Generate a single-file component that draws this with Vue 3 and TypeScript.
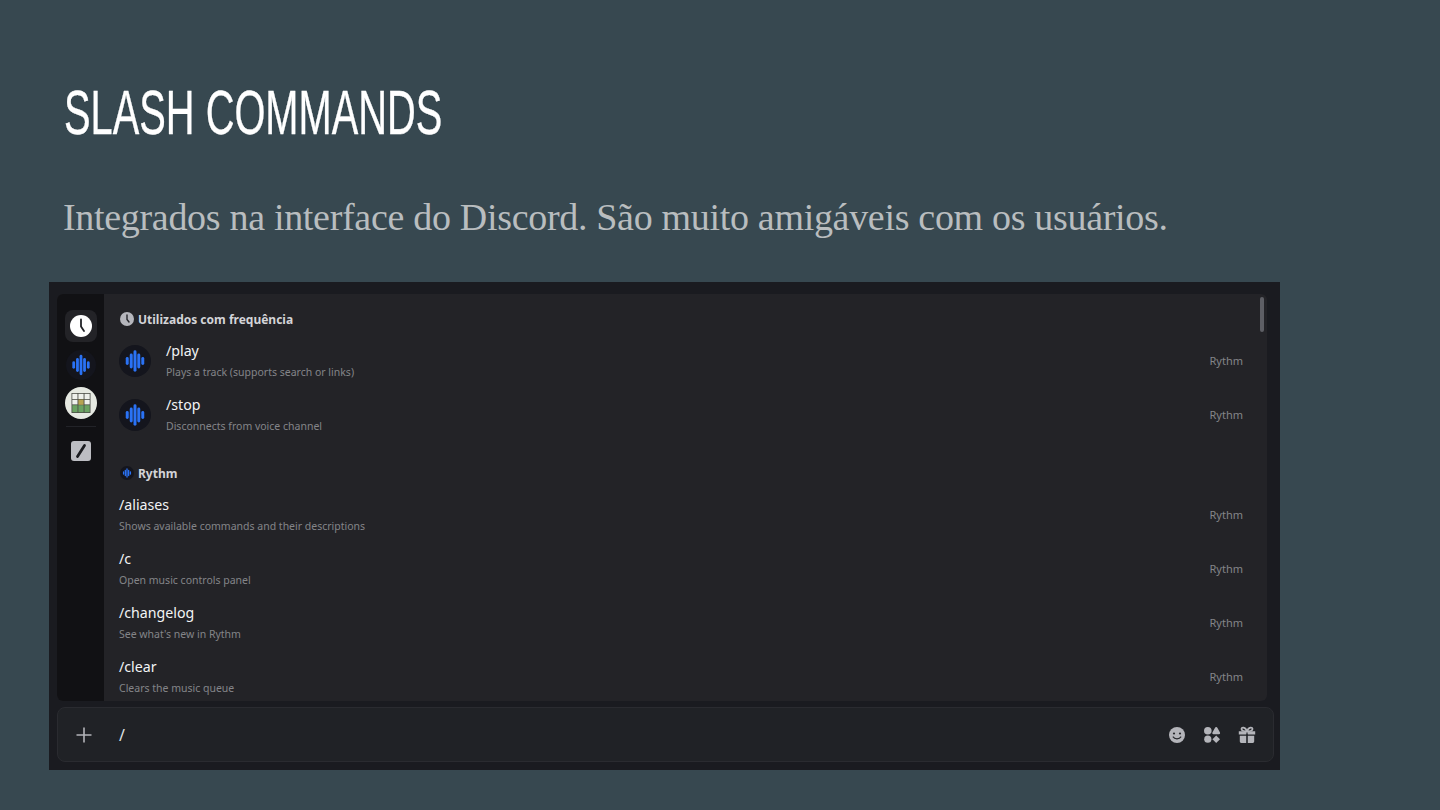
<script setup lang="ts">
interface Cmd { name: string; desc: string }
const frequent: Cmd[] = [
  { name: '/play', desc: 'Plays a track (supports search or links)' },
  { name: '/stop', desc: 'Disconnects from voice channel' },
]
const rythm: Cmd[] = [
  { name: '/aliases', desc: 'Shows available commands and their descriptions' },
  { name: '/c', desc: 'Open music controls panel' },
  { name: '/changelog', desc: "See what's new in Rythm" },
  { name: '/clear', desc: 'Clears the music queue' },
]
const bars = [
  { x: 5.9, h: 7 }, { x: 9.4, h: 13 }, { x: 12.7, h: 19 }, { x: 16, h: 13 }, { x: 19.5, h: 7 },
]
</script>

<template>
  <main class="slide">
    <h1 class="title"><span>SLASH COMMANDS</span></h1>
    <p class="subtitle">Integrados na interface do Discord. São muito amigáveis com os usuários.</p>
    <section class="shot">
      <div class="panel">
        <nav class="rail">
          <div class="rail-btn active">
            <svg width="22" height="22" viewBox="0 0 22 22"><circle cx="11" cy="11" r="11" fill="#fff"/><path d="M11 4.5V11.5L14 16" fill="none" stroke="#222327" stroke-width="1.8" stroke-linecap="round" stroke-linejoin="round"/></svg>
          </div>
          <div class="rail-btn">
            <svg width="30" height="30" viewBox="0 0 28 28"><circle cx="14" cy="14" r="14" fill="#14151d"/><rect v-for="b in bars" :key="b.x" :x="b.x" :y="14 - b.h / 2" width="2.6" :height="b.h" rx="1.3" fill="#2a72f5"/></svg>
          </div>
          <div class="rail-btn">
            <svg width="32" height="32" viewBox="0 0 32 32">
              <circle cx="16" cy="16" r="16" fill="#e6e9e2"/>
              <rect x="6.5" y="6" width="19" height="20" fill="#4c4e48"/>
              <g fill="#eef0ec"><rect x="7.3" y="6.8" width="5.2" height="5.2"/><rect x="13.4" y="6.8" width="5.2" height="5.2"/><rect x="19.5" y="6.8" width="5.2" height="5.2"/><rect x="7.3" y="12.8" width="5.2" height="4.6"/><rect x="19.5" y="12.8" width="5.2" height="4.6"/></g>
              <rect x="13.4" y="12.6" width="5.2" height="5.2" fill="#b5a352"/>
              <g fill="#6aa262"><rect x="7.3" y="18.2" width="5.2" height="7"/><rect x="13.4" y="18.2" width="5.2" height="7"/><rect x="19.5" y="18.2" width="5.2" height="7"/></g>
            </svg>
          </div>
          <div class="rail-sep"></div>
          <div class="rail-btn small">
            <svg width="20" height="20" viewBox="0 0 20 20"><rect width="20" height="20" rx="3" fill="#bcbdc2"/><path d="M6.5 15.5L13.5 4.5" stroke="#1b1c20" stroke-width="2.8" stroke-linecap="round"/></svg>
          </div>
        </nav>
        <div class="list">
          <header class="group first">
            <svg class="gicon" width="14" height="14" viewBox="0 0 14 14"><circle cx="7" cy="7" r="7" fill="#b5b6bc"/><path d="M7 3V7.4L9 10" fill="none" stroke="#25262b" stroke-width="1.4" stroke-linecap="round"/></svg>
            <span>Utilizados com frequência</span>
          </header>
          <div v-for="c in frequent" :key="c.name" class="row">
            <svg class="wave" width="32" height="32" viewBox="0 0 28 28"><circle cx="14" cy="14" r="14" fill="#14151d"/><rect v-for="b in bars" :key="b.x" :x="b.x" :y="14 - b.h / 2" width="2.6" :height="b.h" rx="1.3" fill="#2a72f5"/></svg>
            <div class="text">
              <div class="name">{{ c.name }}</div>
              <div class="desc">{{ c.desc }}</div>
            </div>
            <div class="source">Rythm</div>
          </div>
          <header class="group">
            <svg class="gicon" width="14" height="14" viewBox="0 0 28 28"><circle cx="14" cy="14" r="14" fill="#14151d"/><rect v-for="b in bars" :key="b.x" :x="b.x" :y="14 - b.h / 2" width="2.6" :height="b.h" rx="1.3" fill="#2a72f5"/></svg>
            <span>Rythm</span>
          </header>
          <div v-for="c in rythm" :key="c.name" class="row">
            <div class="text">
              <div class="name">{{ c.name }}</div>
              <div class="desc">{{ c.desc }}</div>
            </div>
            <div class="source">Rythm</div>
          </div>
          <div class="scrollbar"></div>
        </div>
      </div>
      <div class="chatbar">
        <svg class="plus" width="18" height="18" viewBox="0 0 18 18"><path d="M9 1.5V16.5M1.5 9H16.5" stroke="#b3b4b9" stroke-width="1.6"/></svg>
        <span class="slash">/</span>
        <div class="tools">
          <svg width="18" height="18" viewBox="0 0 18 18"><circle cx="9" cy="9" r="8" fill="#b4b5ba"/><circle cx="6" cy="7.5" r="1.1" fill="#26272b"/><circle cx="12" cy="7.5" r="1.1" fill="#26272b"/><path d="M5.2 11C6.5 13.4 11.5 13.4 12.8 11" fill="none" stroke="#26272b" stroke-width="1.3" stroke-linecap="round"/></svg>
          <svg width="18" height="18" viewBox="0 0 18 18" fill="#b4b5ba"><circle cx="4.8" cy="4.8" r="3.8"/><path d="M13.2 1Q14 1 14.5 2L17 6.6Q17.6 8.2 16 8.2H10.4Q8.8 8.2 9.4 6.6L11.9 2Q12.4 1 13.2 1Z"/><circle cx="4.8" cy="13.2" r="3.6"/><path d="M13.2 9.4L17 13.2L13.2 17L9.4 13.2Z"/></svg>
          <svg width="18" height="18" viewBox="0 0 18 18" fill="#b4b5ba"><path d="M0.8 5.2H8.2V8.6H0.8ZM9.8 5.2H17.2V8.6H9.8ZM1.8 9.8H8.2V17H3.2Q1.8 17 1.8 15.6ZM9.8 9.8H16.2V15.6Q16.2 17 14.8 17H9.8Z"/><path d="M9 5.4C7.4 0.6 3 0.8 3.6 3.4C4 5.2 7 5.4 9 5.4C11 5.4 14 5.2 14.4 3.4C15 0.8 10.6 0.6 9 5.4Z" fill="none" stroke="#b4b5ba" stroke-width="1.8"/></svg>
        </div>
      </div>
    </section>
  </main>
</template>

<style scoped>
.slide {
  width: 1440px;
  height: 810px;
  box-sizing: border-box;
  overflow: hidden;
  background: #374850;
  padding: 76px 0 0 49px;
}
.title {
  margin: 0 0 0 15px;
  height: 72px;
  font: 400 63px/72px "Liberation Sans", sans-serif;
  color: #fff;
}
.title span {
  display: inline-block;
  transform: scaleX(0.632);
  transform-origin: left center;
  white-space: nowrap;
  -webkit-text-stroke: 0.35px #fff;
}
.subtitle {
  margin: 45px 0 0 14px;
  height: 47px;
  font: 400 38px/48px "Liberation Serif", serif;
  letter-spacing: -0.31px;
  color: #b9bdbf;
  white-space: nowrap;
}
.shot {
  margin-top: 42px;
  width: 1231px;
  height: 488px;
  box-sizing: border-box;
  background: #1a1b20;
  padding: 12px 6px 8px 8px;
  display: flex;
  flex-direction: column;
  gap: 6px;
}
.panel {
  width: 1210px;
  height: 407px;
  display: flex;
  overflow: hidden;
  border-radius: 6px;
  background: #232327;
}
.rail {
  width: 47px;
  flex: none;
  background: #111114;
  box-sizing: border-box;
  padding-top: 16px;
  display: flex;
  flex-direction: column;
  align-items: center;
  gap: 7px;
}
.rail-btn {
  width: 32px;
  height: 32px;
  display: flex;
  align-items: center;
  justify-content: center;
  border-radius: 8px;
}
.rail-btn.active { background: #232327; }
.rail-btn:nth-child(3) { margin-top: -1px; }
.rail-sep { width: 30px; height: 1px; background: #222328; }
.rail-btn.small { margin-top: 2px; height: 30px; }
.list {
  position: relative;
  flex: 1;
  padding: 10px 24px 0 15px;
  font-family: "Noto Sans", sans-serif;
}
.gicon { margin-left: 1px; margin-right: -1px; }
.group {
  height: 30px;
  display: flex;
  align-items: center;
  gap: 5px;
  margin-top: 16px;
  font-size: 12px;
  font-weight: 700;
  color: #d3d4d8;
}
.group.first { margin-top: 0; }
.row {
  height: 54px;
  display: flex;
  align-items: center;
}
.wave { margin-right: 15px; flex: none; }
.text { flex: 1; }
.name { margin-top: -1.6px; font-size: 14.2px; line-height: 20px; color: #f2f3f5; }
.desc { margin-top: 3.6px; font-size: 10.5px; line-height: 15px; color: #848589; }
.source { margin-top: -2px; font-size: 11px; color: #848589; }
.scrollbar {
  position: absolute;
  top: 3px;
  right: 3px;
  width: 4px;
  height: 35px;
  border-radius: 2px;
  background: #5e5f65;
}
.chatbar {
  width: 1217px;
  height: 55px;
  box-sizing: border-box;
  background: #202226;
  border: 1px solid #2a2b30;
  border-radius: 8px;
  display: flex;
  align-items: center;
  padding: 0 17px 0 17px;
}
.slash { margin-left: 26px; font: 400 16px "Noto Sans", sans-serif; color: #dfe0e3; }
.tools { margin-left: auto; display: flex; gap: 17px; }
</style>
